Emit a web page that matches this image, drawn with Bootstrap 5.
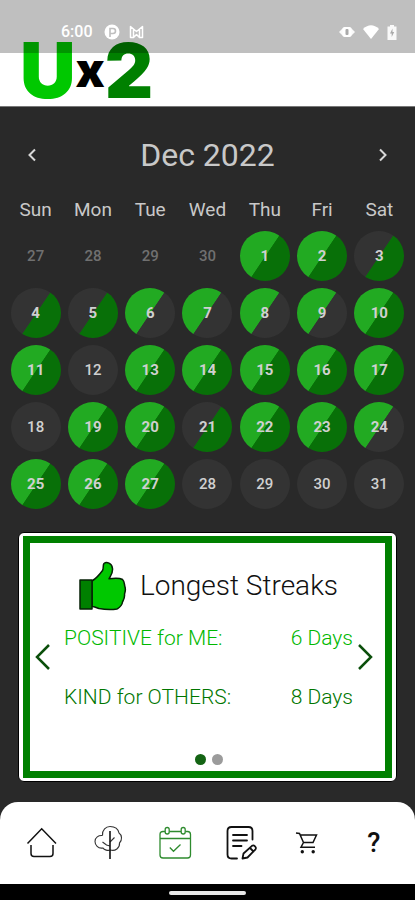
<!DOCTYPE html>
<html lang="en">
<head>
<meta charset="utf-8">
<meta name="viewport" content="width=device-width, initial-scale=1">
<title>Ux2 – Calendar</title>
<link rel="stylesheet" href="https://cdn.jsdelivr.net/npm/bootstrap@5.3.0/dist/css/bootstrap.min.css">
<style>
body { font-family: Roboto, "Liberation Sans", sans-serif; background: #292929; color: #c8c8c8; }
svg { display: block; flex: none; }
.app-head { padding: 32px 0 0 20px; border-bottom: 1px solid #777; }
.status { height: 53px; background: rgba(0,0,0,.25); padding: 22px 18px 0 61px; font-size: 16px; line-height: 20px; color: #fff; }
.logo { height: 74px; font: 900 77px/77px Inter, sans-serif; color: #00c800; }
.logo-x { font-size: 48px; line-height: 48px; color: #000; vertical-align: 11px; }
.logo-two { font-size: 75px; color: #008000; }
.month-bar { padding: 24px 20px 0; }
.month-bar h1 { font-size: 32px; line-height: 48px; font-weight: 400; }
.month-bar button { width: 24px; height: 24px; color: #d8d8d8; }
.cal-wrap { padding: 12px 7px 0; }
.cal { table-layout: fixed; border-collapse: collapse; }
.cal th { font-size: 19px; line-height: 24px; padding: 7px 0 5px; font-weight: 400; }
.cal td { padding: 4px 0 3px; }
.day { width: 50px; height: 50px; margin: 0 auto; display: block; padding: 0; border: 0; border-radius: 50%; font-size: 15px; line-height: 50px; font-weight: 500; color: #d0d0d0; background: #333; }
.day.outside { background: none; color: #707070; }
.day.both { background: linear-gradient(124deg, #22aa22 50%, #087008 51%); }
.day.first { background: linear-gradient(124deg, #22aa22 50%, #333 51%); }
.day.second { background: linear-gradient(124deg, #333 50%, #087008 51%); }
.day.both, .day.first, .day.second { font-weight: 700; }
.streak-wrap { padding: 20px 18px; }
.streak-frame { background: #fff; border: 1px solid #000; border-radius: 6px; padding: 3px 4px; }
.streak-inner { border: 7px solid #008000; height: 242px; padding: 0 12px 0 5px; }
.streak-body { padding: 16px 5px 0 14px; }
.streak-body h2 { font-size: 28px; line-height: 32px; font-weight: 300; color: #111; }
.streak-title { height: 54px; gap: 13px; }
.streak-row { font-size: 21px; line-height: 26px; }
.positive { color: #00b800; margin: 12px 0 33px; }
.kind { color: #007600; }
.dots { gap: 6px; margin-top: 44px; }
.dots button { width: 11px; height: 11px; padding: 0; border: 0; border-radius: 50%; background: #9b9b9b; }
.dots button.on { background: #146414; }
.tabs { background: #fff; border-radius: 18px 18px 0 0; height: 82px; padding: 0 8px 0 9px; }
.tabs a { color: #111; text-decoration: none; font-size: 27px; line-height: 40px; font-weight: 500; }
.gesture { height: 16px; background: #000; }
.gesture span { width: 77px; height: 4px; border-radius: 2px; background: #e8e8e8; margin-top: 1px; }
</style>
<script src="https://cdn.jsdelivr.net/npm/bootstrap@5.3.0/dist/js/bootstrap.bundle.min.js"></script>
</head>
<body>
<div class="min-vh-100 d-flex flex-column">
<header class="app-head bg-white position-relative">
  <div class="logo">U<span class="logo-x">x</span><span class="logo-two">2</span></div>
  <div class="status position-absolute top-0 start-0 w-100">
    <div class="d-flex align-items-center w-100">
      <span class="fw-medium">6:00</span>
      <svg class="ms-2 me-2" width="20" height="16" viewBox="0 0 20 16"><circle cx="11" cy="8" r="7.500" fill="#fff"/><path d="M9 13V4.500h3a2.500 2.500 0 0 1 0 5H9.500" fill="none" stroke="#bfbfbf" stroke-width="1.600"/></svg>
      <svg width="15" height="14" viewBox="0 0 15 14"><path d="M1.500 12.500V1.500L7.500 6.500l6-5v11h-3L7.500 9.500l-3 3zM4.500 12.500v-8M10.500 12.500v-8" fill="none" stroke="#fff" stroke-width="1.500" stroke-linejoin="round"/></svg>
      <svg class="ms-auto" width="16" height="12" viewBox="0 0 16 12"><path d="M0 6l4-4v8zM16 6l-4-4v8z" fill="#fff" opacity=".9"/><rect x="3.500" y="1" width="9" height="10" rx="2" fill="#fff"/><rect x="6.500" y="3" width="3" height="6" rx="1" fill="#aaa"/></svg>
      <svg class="mx-2" width="16" height="14" viewBox="0 0 16 14"><path d="M0 4Q8-3.500 16 4L8 14z" fill="#fff"/></svg>
      <svg width="10" height="15" viewBox="0 0 10 15"><path d="M3 0h4v1.500h2.500V15h-9V1.500H3z" fill="#fff" opacity=".9"/><path d="M5.500 3.500L3 8.500h1.700V12L7.200 7H5.500z" fill="#aaa"/></svg>
    </div>
  </div>
</header>
<main>
  <div class="month-bar d-flex justify-content-between align-items-center">
    <button class="btn p-0 border-0" aria-label="Previous month"><svg width="24" height="24" viewBox="0 0 24 24" fill="none" stroke="currentColor" stroke-width="2"><path d="M15 6.500l-5.500 5.500 5.500 5.500"/></svg></button>
    <h1 class="m-0">Dec 2022</h1>
    <button class="btn p-0 border-0" aria-label="Next month"><svg width="24" height="24" viewBox="0 0 24 24" fill="none" stroke="currentColor" stroke-width="2"><path d="M9 6.500l5.500 5.500L9 17.500"/></svg></button>
  </div>
  <div class="cal-wrap">
  <table class="cal w-100 text-center">
    <thead><tr><th>Sun</th><th>Mon</th><th>Tue</th><th>Wed</th><th>Thu</th><th>Fri</th><th>Sat</th></tr></thead>
    <tbody>
    <tr><td><button class="day outside">27</button></td><td><button class="day outside">28</button></td><td><button class="day outside">29</button></td><td><button class="day outside">30</button></td><td><button class="day both">1</button></td><td><button class="day both">2</button></td><td><button class="day second">3</button></td></tr>
    <tr><td><button class="day second">4</button></td><td><button class="day second">5</button></td><td><button class="day first">6</button></td><td><button class="day first">7</button></td><td><button class="day first">8</button></td><td><button class="day first">9</button></td><td><button class="day both">10</button></td></tr>
    <tr><td><button class="day both">11</button></td><td><button class="day">12</button></td><td><button class="day both">13</button></td><td><button class="day both">14</button></td><td><button class="day both">15</button></td><td><button class="day both">16</button></td><td><button class="day both">17</button></td></tr>
    <tr><td><button class="day">18</button></td><td><button class="day both">19</button></td><td><button class="day both">20</button></td><td><button class="day second">21</button></td><td><button class="day both">22</button></td><td><button class="day both">23</button></td><td><button class="day first">24</button></td></tr>
    <tr><td><button class="day both">25</button></td><td><button class="day both">26</button></td><td><button class="day both">27</button></td><td><button class="day">28</button></td><td><button class="day">29</button></td><td><button class="day">30</button></td><td><button class="day">31</button></td></tr>
    </tbody>
  </table>
  </div>
  <section class="streak-wrap">
    <div class="streak-frame">
      <div class="streak-inner d-flex align-items-center">
        <button class="btn p-0 border-0" aria-label="Previous"><svg width="15" height="28" viewBox="0 0 15 28" fill="none" stroke="#0b4f0b" stroke-width="2.500"><path d="M14 2L2 14l12 12"/></svg></button>
        <div class="streak-body flex-grow-1 align-self-stretch">
          <div class="streak-title d-flex align-items-center justify-content-center">
            <svg width="48" height="50" viewBox="0 0 48 50" stroke="#062006" stroke-width="1.500" stroke-linejoin="round"><path d="M13 20C18 17 21 13 23.500 9.500C25 7 23.500 4.500 25 2.500C27.500.500 33 2 33.500 7.500C34 12 32 14 30 17.800C35 17 41 17 43.500 18.500C46 21 45 23 46 26C47 29 46 31 45.500 33C46 37 44.500 39 43.500 41C43 45 41 46 38 48C32 49 25 48.500 20 47.500C17 46.500 15 45.500 13 45.500z" fill="#00c800"/><path d="M1 19h12v29H1z" fill="#008000"/></svg>
            <h2 class="m-0 text-nowrap">Longest Streaks</h2>
          </div>
          <div class="streak-row positive fw-light d-flex justify-content-between text-nowrap"><span>POSITIVE for ME:</span><span>6 Days</span></div>
          <div class="streak-row kind fw-light d-flex justify-content-between text-nowrap"><span>KIND for OTHERS:</span><span>8 Days</span></div>
          <div class="dots d-flex justify-content-center"><button class="on" aria-label="Slide 1"></button><button aria-label="Slide 2"></button></div>
        </div>
        <button class="btn p-0 border-0" aria-label="Next"><svg width="15" height="28" viewBox="0 0 15 28" fill="none" stroke="#0b4f0b" stroke-width="2.500"><path d="M1 2l12 12L1 26"/></svg></button>
      </div>
    </div>
  </section>
</main>
<footer class="mt-auto">
  <nav class="tabs d-flex align-items-center">
    <a class="col d-flex justify-content-center" href="#" aria-label="Home"><svg width="40" height="40" viewBox="0 0 40 40" fill="none" stroke="#111" stroke-width="1.500"><path d="M5.500 20.500L19.700 5.800 34 20.500M9 22v8.500q0 3 3 3h16q3 0 3-3V22"/></svg></a>
    <a class="col d-flex justify-content-center" href="#" aria-label="Tree"><svg width="40" height="40" viewBox="0 0 40 40" fill="none" stroke="#333" stroke-width="1.100"><path d="M14.500 12.500C14 7 18 3.500 22 3.500C26 3.500 30 5 31 10C34 12 34.500 17 31.500 20C32 25 27 28.500 22.500 27C20 28 16 27 15 25C10 26 7 22 7 18.500C7 14.500 10.500 12 14.500 12.500M22 19l4.500-4.500M14.500 19l4 3 3.500 1"/><path d="M22 8v28" stroke="#111" stroke-width="1.600"/></svg></a>
    <a class="col d-flex justify-content-center" href="#" aria-label="Calendar" aria-current="page"><svg width="40" height="40" viewBox="0 0 40 40" fill="none" stroke="#2e8b2e" stroke-width="1.300"><path d="M10 8.500H8q-3 0-3 3V32q0 3 3 3h24.500q3 0 3-3V11.500q0-3-3-3h-2M14.500 8.500h11.500M5 15.500h30.500"/><rect x="10.200" y="4.500" width="4" height="6.500" rx="2"/><rect x="26.200" y="4.500" width="4" height="6.500" rx="2"/><path d="M14.800 24.500l3.700 3.800 7-6.800"/></svg></a>
    <a class="col d-flex justify-content-center" href="#" aria-label="Journal"><svg width="40" height="40" viewBox="0 0 40 40" fill="none" stroke="#111" stroke-width="1.800" stroke-linecap="round" stroke-linejoin="round"><path d="M16 35.500h-5.500q-4 0-4-4V8q0-4 4-4H27.500q4 0 4 4v8.500M12 12h14M12 17.500h14M12 23h8.500"/><path d="M21.500 35.500l1-5L31 22.800q1.500-1 3 .5t.5 3L26.500 34.500zM29 25l3.500 3.500"/></svg></a>
    <a class="col d-flex justify-content-center" href="#" aria-label="Shop"><svg width="40" height="40" viewBox="0 0 40 40" fill="none" stroke="#111" stroke-width="1.500"><path d="M9 10l3.500.5L16.500 19.500H26L29.500 12H13.500M16.500 19.500L14 24.200h14"/><circle cx="15.300" cy="28.700" r="1.700" fill="#111" stroke="none"/><circle cx="26.200" cy="28.700" r="1.700" fill="#111" stroke="none"/></svg></a>
    <a class="col d-flex justify-content-center" href="#" aria-label="Help">?</a>
  </nav>
  <div class="gesture d-flex justify-content-center align-items-center"><span></span></div>
</footer>
</div>
</body>
</html>
